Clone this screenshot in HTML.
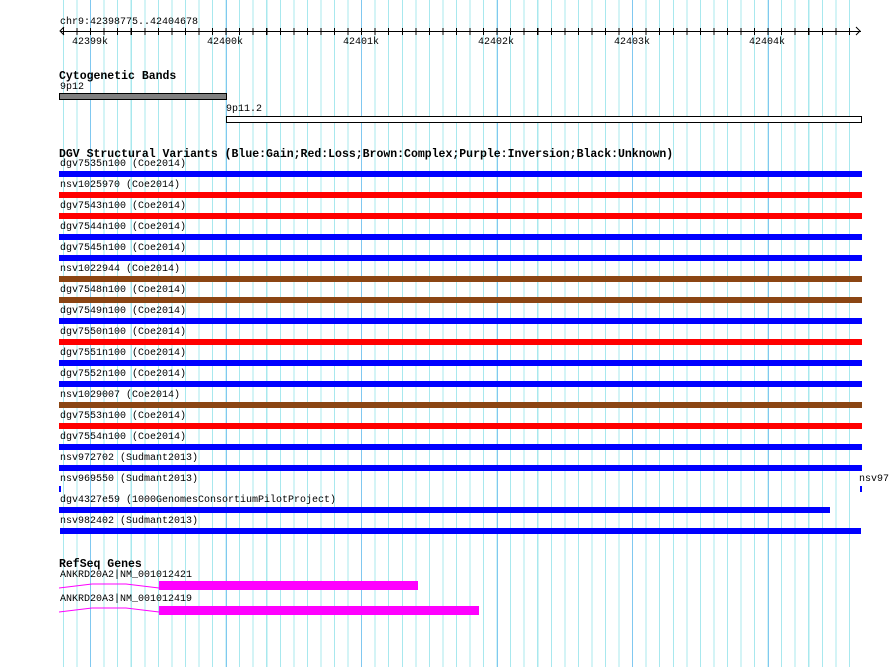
<!DOCTYPE html>
<html><head><meta charset="utf-8"><style>
body{margin:0;width:890px;height:667px;background:#fff;position:relative;overflow:hidden;font-family:"Liberation Mono",monospace;}
.a{position:absolute}
.t{position:absolute;font-size:10px;line-height:10px;color:#000;white-space:pre;margin-top:2px}
.h{position:absolute;font-size:11.5px;line-height:12px;font-weight:bold;color:#000;white-space:pre;margin-top:3px}
.grid{position:absolute;left:63px;top:0;width:788px;height:667px;background-image:repeating-linear-gradient(90deg,#a8e8ee 0,#a8e8ee 1px,transparent 1px,transparent 13.55px)}
.maj{position:absolute;top:0;width:1px;height:667px;background:#80c8f0}
.bar{position:absolute;left:59px;width:803px;height:6px}
.b{background:#0000ff}.r{background:#ff0000}.n{background:#8b4513}
</style></head><body>
<div class="grid"></div>
<div class="maj" style="left:90px"></div><div class="maj" style="left:226px"></div><div class="maj" style="left:361px"></div><div class="maj" style="left:497px"></div><div class="maj" style="left:632px"></div><div class="maj" style="left:768px"></div>

<div class="t" style="left:60px;top:16px">chr9:42398775..42404678</div>
<div class="a" style="left:61px;top:31px;width:800px;height:1px;background:#000"></div>
<div class="a" style="left:63px;top:28px;width:788px;height:7px;background-image:repeating-linear-gradient(90deg,#000 0,#000 1px,transparent 1px,transparent 13.55px)"></div>
<svg class="a" style="left:58px;top:26px" width="808" height="11"><polyline points="6,1 2,5 6,9" fill="none" stroke="#000"/><polyline points="798,1 802,5 798,9" fill="none" stroke="#000"/></svg>
<div class="t" style="left:72px;top:36px">42399k</div>
<div class="t" style="left:207px;top:36px">42400k</div>
<div class="t" style="left:343px;top:36px">42401k</div>
<div class="t" style="left:478px;top:36px">42402k</div>
<div class="t" style="left:614px;top:36px">42403k</div>
<div class="t" style="left:749px;top:36px">42404k</div>

<div class="h" style="left:59px;top:68px">Cytogenetic Bands</div>
<div class="t" style="left:60px;top:81px">9p12</div>
<div class="a" style="left:59px;top:93px;width:166px;height:5px;background:#808080;border:1px solid #000"></div>
<div class="t" style="left:226px;top:103px">9p11.2</div>
<div class="a" style="left:226px;top:116px;width:634px;height:5px;background:#fff;border:1px solid #000"></div>

<div class="h" style="left:59px;top:146px">DGV Structural Variants (Blue:Gain;Red:Loss;Brown:Complex;Purple:Inversion;Black:Unknown)</div>

<div class="t" style="left:60px;top:158px">dgv7535n100 (Coe2014)</div><div class="bar b" style="top:171px"></div>
<div class="t" style="left:60px;top:179px">nsv1025970 (Coe2014)</div><div class="bar r" style="top:192px"></div>
<div class="t" style="left:60px;top:200px">dgv7543n100 (Coe2014)</div><div class="bar r" style="top:213px"></div>
<div class="t" style="left:60px;top:221px">dgv7544n100 (Coe2014)</div><div class="bar b" style="top:234px"></div>
<div class="t" style="left:60px;top:242px">dgv7545n100 (Coe2014)</div><div class="bar b" style="top:255px"></div>
<div class="t" style="left:60px;top:263px">nsv1022944 (Coe2014)</div><div class="bar n" style="top:276px"></div>
<div class="t" style="left:60px;top:284px">dgv7548n100 (Coe2014)</div><div class="bar n" style="top:297px"></div>
<div class="t" style="left:60px;top:305px">dgv7549n100 (Coe2014)</div><div class="bar b" style="top:318px"></div>
<div class="t" style="left:60px;top:326px">dgv7550n100 (Coe2014)</div><div class="bar r" style="top:339px"></div>
<div class="t" style="left:60px;top:347px">dgv7551n100 (Coe2014)</div><div class="bar b" style="top:360px"></div>
<div class="t" style="left:60px;top:368px">dgv7552n100 (Coe2014)</div><div class="bar b" style="top:381px"></div>
<div class="t" style="left:60px;top:389px">nsv1029007 (Coe2014)</div><div class="bar n" style="top:402px"></div>
<div class="t" style="left:60px;top:410px">dgv7553n100 (Coe2014)</div><div class="bar r" style="top:423px"></div>
<div class="t" style="left:60px;top:431px">dgv7554n100 (Coe2014)</div><div class="bar b" style="top:444px"></div>
<div class="t" style="left:60px;top:452px">nsv972702 (Sudmant2013)</div><div class="bar b" style="top:465px"></div>
<div class="t" style="left:60px;top:473px">nsv969550 (Sudmant2013)</div><div class="a b" style="left:59px;top:486px;width:2px;height:6px"></div>
<div class="t" style="left:859px;top:473px">nsv97</div><div class="a b" style="left:860px;top:486px;width:2px;height:6px"></div>
<div class="t" style="left:60px;top:494px">dgv4327e59 (1000GenomesConsortiumPilotProject)</div><div class="bar b" style="top:507px;width:771px"></div>
<div class="t" style="left:60px;top:515px">nsv982402 (Sudmant2013)</div><div class="bar b" style="top:528px;left:60px;width:801px"></div>

<div class="h" style="left:59px;top:556px">RefSeq Genes</div>
<div class="t" style="left:60px;top:569px">ANKRD20A2|NM_001012421</div>
<svg class="a" style="left:59px;top:580px" width="102" height="12"><polyline points="0,8 33,4 67,4 100,8" fill="none" stroke="#ff00ff" stroke-width="1"/></svg>
<div class="a" style="left:159px;top:581px;width:259px;height:9px;background:#ff00ff"></div>
<div class="t" style="left:60px;top:593px">ANKRD20A3|NM_001012419</div>
<svg class="a" style="left:59px;top:604px" width="102" height="12"><polyline points="0,8 33,4 67,4 100,8" fill="none" stroke="#ff00ff" stroke-width="1"/></svg>
<div class="a" style="left:159px;top:606px;width:320px;height:9px;background:#ff00ff"></div>
</body></html>
